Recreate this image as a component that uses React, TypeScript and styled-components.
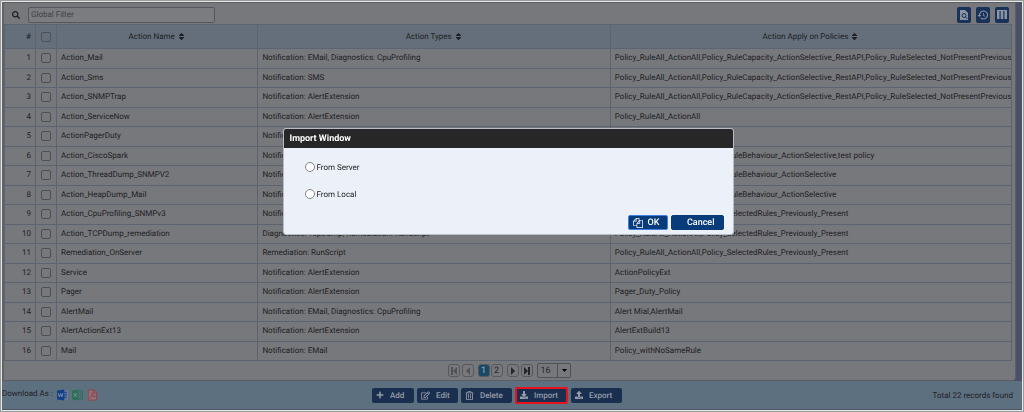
import React from 'react';
import styled, { createGlobalStyle, css } from 'styled-components';
import { FaSearch, FaSort, FaPlus, FaRegEdit, FaRegTrashAlt, FaDownload, FaUpload } from 'react-icons/fa';

const Global = createGlobalStyle`
  * { box-sizing: border-box; }
  body { margin: 0; background: #e4e7e4; font-family: Roboto, sans-serif; font-size: 8px; color: #1e2024; text-rendering: geometricPrecision; }
  button, input, select { font-family: inherit; text-rendering: inherit; }
`;
const Page = styled.main`
  border: 1px solid #999b9b; padding: 1px; min-height: 100vh; display: flex; flex-direction: column;
`;
const Body = styled.div`
  flex: 1; background: #4b5166; padding-right: 6px; border-left: 2px solid #5f6368;
`;
const Panel = styled.section`
  background: #77787b; border: 1px solid #5b5e66; border-left: 0; border-radius: 0 0 4px 0;
  padding: 0 3px 0 0; height: 100%; display: flex; flex-direction: column;
`;
const Toolbar = styled.div`
  height: 21px; display: flex; align-items: center; padding: 2px 3px 0 8px; gap: 8px; color: #1c1e22;
`;
const Filter = styled.input`
  width: 187px; height: 16px; border: 1px solid #54575c; border-radius: 2px; background: #7b7c7f; padding: 0 2px; font-size: 8px;
  &::placeholder { color: #3f4145; opacity: 1; }
`;
const Tools = styled.div` margin-left: auto; display: flex; gap: 5px; `;
const Tool = styled.button`
  width: 14px; height: 16px; padding: 0; border: 0; border-radius: 2px; background: #18325a; color: #8b94a2;
  display: flex; align-items: center; justify-content: center;
`;
const Table = styled.table`
  width: 100%; height: 337px; table-layout: fixed; border-collapse: collapse;
`;
const cell = css` border: 1px solid #5b6470; padding: 0 4px; overflow: hidden; white-space: nowrap; line-height: 14px; `;
const Th = styled.th` ${cell} height: 24px; background: #646f7b; font-weight: 400; text-align: ${p => p.align || 'center'};
  svg { vertical-align: -2px; }
`;
const Td = styled.td` ${cell} text-align: ${p => p.align || 'left'}; `;
const Check = styled.input`
  appearance: none; display: block; margin: 0 auto; width: 10px; height: 10px; border: 1px solid #4d4f53; border-radius: 2px;
`;
const Pager = styled.nav`
  height: 19px; display: flex; align-items: center; justify-content: center; gap: 2px; padding-left: 2px;
`;
const PageButton = styled.button<{ $on?: boolean; $faint?: boolean }>`
  width: 12px; height: 13px; padding: 0; font-size: 9px; line-height: 12px; border: 1px solid #56585d; border-radius: 3px;
  display: flex; align-items: center; justify-content: center;
  background: ${p => (p.$on ? '#174a66' : 'transparent')}; color: ${p => (p.$on ? '#a5afb8' : p.$faint ? '#505256' : '#232529')};
`;
const Pages = styled.div` display: flex; gap: 1px; margin: 0 2px; `;
const SelectBox = styled.label`
  display: flex; align-items: center; position: relative; margin-left: 2px;
  svg { position: absolute; right: 4px; pointer-events: none; }
`;
const Size = styled.select`
  appearance: none; width: 34px; height: 15px; font-size: 9px; line-height: 12px; padding: 0 3px; color: #25272b;
  border: 1px solid #505257; border-radius: 2px; background: linear-gradient(to left, #77787b 12px, #505257 12px, #505257 13px, #77787b 13px);
`;
const Footer = styled.footer`
  height: 29px; background: #5d7080; border-bottom: 1px solid #4b5666; display: grid; grid-template-columns: 1fr auto 1fr; align-items: center;
`;
const Downloads = styled.div` display: flex; align-items: center; gap: 4px; `;
const DownloadLabel = styled.span` padding-bottom: 4px; `;
const FileLink = styled.a` display: flex; `;
const Actions = styled.div` display: flex; align-items: center; gap: 3px; margin-right: 30px; `;
const Action = styled.button<{ $w: number; $hot?: boolean }>`
  width: ${p => p.$w}px; height: 15px; padding: 0 4px; display: flex; align-items: center; gap: 6px; font-size: 8px; font-weight: 500;
  border: 0; border-radius: 2px; background: #1a2f50; color: #959ca7;
  ${p => p.$hot && css` height: 17px; padding: 0 3px; border: 2px solid #e8121c; `}
  svg { flex: none; }
`;
const Total = styled.span` justify-self: end; padding-right: 9px; `;
const Overlay = styled.div`
  position: fixed; inset: 0; display: flex; justify-content: center; align-items: flex-start; padding: 128px 8px 0 0;
`;
const Dialog = styled.section`
  width: 451px; border: 1px solid #b9bcc2; border-radius: 3px; background: #ebf0f9; color: #222; overflow: hidden;
`;
const Title = styled.h2`
  margin: 0; height: 19px; line-height: 20px; padding: 0 6px; background: #272727; color: #fff; font-size: 9px; font-weight: 700;
`;
const Choices = styled.div` padding: 12px 21px 0; display: flex; flex-direction: column; gap: 13px; height: 67px; `;
const Choice = styled.label` display: flex; align-items: center; gap: 2px; height: 14px; `;
const Radio = styled.input`
  appearance: none; width: 10px; height: 10px; margin: 0; border: 1px solid #858585; border-radius: 50%; background: #fff;
`;
const DialogFooter = styled.div` display: flex; justify-content: flex-end; gap: 3px; padding: 0 9px 4px; `;
const DialogButton = styled.button<{ $primary?: boolean }>`
  height: 15px; width: ${p => (p.$primary ? 40 : 53)}px; padding: 0 ${p => (p.$primary ? 4 : 8)}px; display: flex; align-items: center;
  gap: 5px; justify-content: ${p => (p.$primary ? 'flex-start' : 'flex-end')};
  font-size: 9px; font-weight: 500; color: #fff; background: #083b79; border: 1px solid ${p => (p.$primary ? '#3f80e0' : '#083b79')}; border-radius: 2px;
`;

const EM = 'Notification: EMail';
const AE = 'Notification: AlertExtension';
const LONG = 'Policy_RuleAll_ActionAll,Policy_RuleCapacity_ActionSelective_RestAPI,Policy_RuleSelected_NotPresentPreviously';
const BEH = 'Policy_RuleAll_ActionAll,Policy_RuleBehaviour_ActionSelective';
const SEL = 'Policy_RuleAll_ActionAll,Policy_SelectedRules_Previously_Present';
const rows = [
  ['Action_Mail', EM + ', Diagnostics: CpuProfiling', LONG],
  ['Action_Sms', 'Notification: SMS', LONG],
  ['Action_SNMPTrap', AE, LONG],
  ['Action_ServiceNow', AE, 'Policy_RuleAll_ActionAll'],
  ['ActionPagerDuty', AE, ''],
  ['Action_CiscoSpark', AE, BEH + ',test policy'],
  ['Action_ThreadDump_SNMPV2', AE, BEH],
  ['Action_HeapDump_Mail', AE, BEH],
  ['Action_CpuProfiling_SNMPv3', AE, SEL],
  ['Action_TCPDump_remediation', 'Diagnostics: TcpDump, Remediation: RunScript', SEL],
  ['Remediation_OnServer', 'Remediation: RunScript', SEL],
  ['Service', AE, 'ActionPolicyExt'],
  ['Pager', AE, 'Pager_Duty_Policy'],
  ['AlertMail', EM + ', Diagnostics: CpuProfiling', 'Alert Mial,AlertMail'],
  ['AlertActionExt13', AE, 'AlertExtBuild13'],
  ['Mail', EM, 'Policy_withNoSameRule'],
];

const Arrow = ({ back, end }: { back?: boolean; end?: boolean }) => (
  <svg width="8" height="8" viewBox="0 0 8 8" fill="currentColor">
    <path transform={back ? 'matrix(-1 0 0 1 8 0)' : undefined} d={end ? 'M1 0 5 4 1 8zM5 0h2v8H5z' : 'M2 0 6 4 2 8z'} />
  </svg>
);
const FilesIcon = () => (
  <svg width="10" height="10" viewBox="0 0 1792 1792" fill="currentColor">
    <path d="M1696 384q40 0 68 28t28 68v1216q0 40-28 68t-68 28h-960q-40 0-68-28t-28-68v-288h-544q-40 0-68-28t-28-68v-672q0-40 20-88t48-76l408-408q28-28 76-48t88-20h416q40 0 68 28t28 68v328q68-40 128-40h416zm-544 213l-299 299h299v-299zm-640-384l-299 299h299v-299zm196 647l316-316v-416h-384v416q0 40-28 68t-68 28h-416v640h512v-256q0-40 20-88t48-76zm956 804v-1152h-384v416q0 40-28 68t-68 28h-416v640h896z" />
  </svg>
);
const FileIcon = ({ kind }: { kind: 'word' | 'excel' | 'pdf' }) => (
  <svg width="11" height="12" viewBox="0 0 12 12">
    {kind === 'word' && <><path d="M7 1h5v10H7z" fill="#7180a0" /><path d="M7.5 3H11M7.5 5H11M7.5 7H11M7.5 9H11" stroke="#153f86" /><path d="M0 1 8 0v12L0 11z" fill="#153f86" /><path d="m1.5 4 1 4L4 4.5 5.300 8l1-4" fill="none" stroke="#8292b0" /></>}
    {kind === 'excel' && <><path d="M6.500 1.500h5v9h-5M8 4h3M8 6h3M8 8h3" fill="none" stroke="#2c7058" /><path d="M0 1 7 0v12L0 11z" fill="#2c7058" /><path d="m2 4 3 4M5 4 2 8" stroke="#80998f" /></>}
    {kind === 'pdf' && <><path d="M1.500.5h6L10.500 3.500v8h-9z" fill="#85767a" stroke="#a13c48" /><path d="M7 0v4h4" fill="none" stroke="#a13c48" /><path d="M3 9.500C5 8 6 5.500 5.500 3.500 5 6 7 8 9 7.500 7 7 4.500 7.500 3 9.500z" fill="none" stroke="#a13c48" /></>}
  </svg>
);

export default function App() {
  return (
    <>
      <Global />
      <Page>
        <Body>
          <Panel>
            <Toolbar>
              <FaSearch size={8} />
              <Filter aria-label="Global Filter" placeholder="Global Filter" />
              <Tools>
                <Tool aria-label="Preview">
                  <svg width="10" height="12" viewBox="0 0 10 12"><path d="M1 1h5l3 3v7H1z" fill="#8b94a2" /><circle cx="5" cy="6.500" r="2" fill="none" stroke="#18325a" /><path d="m6.500 8 2 2" stroke="#18325a" /></svg>
                </Tool>
                <Tool aria-label="History">
                  <svg width="12" height="12" viewBox="0 0 24 24" fill="currentColor"><path d="M13 3a9 9 0 0 0-9 9H1l3.900 3.900.1.1L9 12H6a7 7 0 1 1 2.100 4.900l-1.400 1.400A9 9 0 1 0 13 3zm-1 5v5l4.300 2.500.7-1.200-3.500-2.100V8z" /></svg>
                </Tool>
                <Tool aria-label="Columns">
                  <svg width="10" height="9" viewBox="0 0 10 9" fill="#8b94a2"><path d="M0 0h10v1H0zM0 1h2.500v8H0zM3.700 1h2.600v8H3.700zM7.500 1H10v8H7.500z" /></svg>
                </Tool>
              </Tools>
            </Toolbar>
            <Table>
              <colgroup><col style={{ width: 31 }} /><col style={{ width: 21 }} /><col style={{ width: '20%' }} /><col style={{ width: '35%' }} /><col /></colgroup>
              <thead>
                <tr>
                  <Th align="right">#</Th>
                  <Th><Check type="checkbox" aria-label="Select all" /></Th>
                  {['Action Name', 'Action Types', 'Action Apply on Policies'].map(h => <Th key={h}>{h} <FaSort size={9} /></Th>)}
                </tr>
              </thead>
              <tbody>
                {rows.map((r, i) => (
                  <tr key={r[0]}>
                    <Td align="right">{i + 1}</Td>
                    <Td><Check type="checkbox" aria-label={'Select ' + r[0]} /></Td>
                    {r.map((t, j) => <Td key={j}>{t}</Td>)}
                  </tr>
                ))}
              </tbody>
            </Table>
            <Pager aria-label="Pages">
              <PageButton $faint aria-label="First"><Arrow back end /></PageButton>
              <PageButton $faint aria-label="Previous"><Arrow back /></PageButton>
              <Pages><PageButton $on>1</PageButton><PageButton>2</PageButton></Pages>
              <PageButton aria-label="Next"><Arrow /></PageButton>
              <PageButton aria-label="Last"><Arrow end /></PageButton>
              <SelectBox>
                <Size aria-label="Rows per page"><option>16</option></Size>
                <svg width="5" height="3" viewBox="0 0 5 3"><path d="M0 0h5L2.500 3z" /></svg>
              </SelectBox>
            </Pager>
          </Panel>
        </Body>
        <Footer>
          <Downloads>
            <DownloadLabel>Download As :</DownloadLabel>
            <FileLink href="#word" aria-label="Word"><FileIcon kind="word" /></FileLink>
            <FileLink href="#excel" aria-label="Excel"><FileIcon kind="excel" /></FileLink>
            <FileLink href="#pdf" aria-label="PDF"><FileIcon kind="pdf" /></FileLink>
          </Downloads>
          <Actions>
            <Action $w={42}><FaPlus size={8} />Add</Action>
            <Action $w={41}><FaRegEdit size={9} />Edit</Action>
            <Action $w={51}><FaRegTrashAlt size={9} />Delete</Action>
            <Action $w={53} $hot><FaDownload size={8} />Import</Action>
            <Action $w={51}><FaUpload size={8} />Export</Action>
          </Actions>
          <Total>Total 22 records found</Total>
        </Footer>
      </Page>
      <Overlay>
        <Dialog role="dialog" aria-labelledby="import-title">
          <Title id="import-title">Import Window</Title>
          <Choices>
            <Choice><Radio type="radio" name="source" />From Server</Choice>
            <Choice><Radio type="radio" name="source" />From Local</Choice>
          </Choices>
          <DialogFooter>
            <DialogButton $primary><FilesIcon />OK</DialogButton>
            <DialogButton>Cancel</DialogButton>
          </DialogFooter>
        </Dialog>
      </Overlay>
    </>
  );
}
